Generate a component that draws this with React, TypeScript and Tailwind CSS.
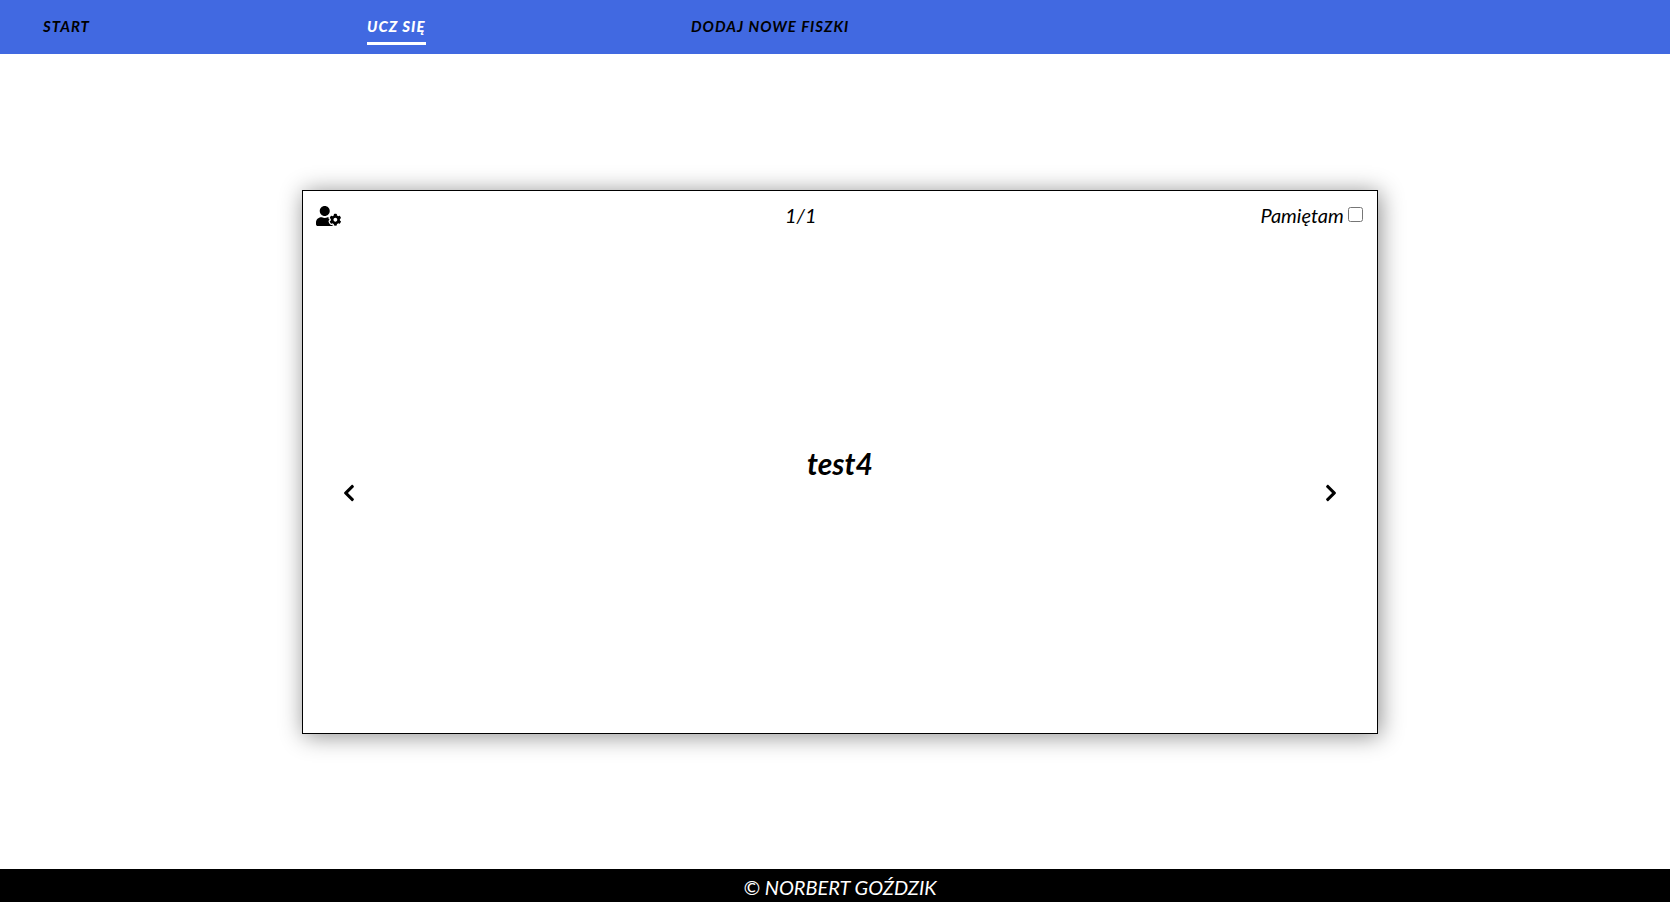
import { useState } from "react";
import { FaChevronLeft, FaChevronRight, FaUserCog } from "react-icons/fa";

const links = [
  { label: "START", href: "#start" },
  { label: "UCZ SIĘ", href: "#learn", active: true },
  { label: "DODAJ NOWE FISZKI", href: "#add" },
];

function Navigation() {
  return (
    <nav className="bg-[#4169e1] px-[43px]">
      <ul className="flex h-[54px] items-start">
        {links.map((link) => (
          <li key={link.label} className="w-[324px] pt-4">
            <a
              href={link.href}
              aria-current={link.active ? "page" : undefined}
              className={
                link.active
                  ? "block w-fit border-b-[3px] border-white pb-1.5 text-[15px] leading-5 font-black tracking-[1px] text-white"
                  : "block w-fit text-[15px] leading-5 font-bold tracking-[1px] text-black"
              }
            >
              {link.label}
            </a>
          </li>
        ))}
      </ul>
    </nav>
  );
}

function Flashcard() {
  const [remembered, setRemembered] = useState(false);

  return (
    <section className="flex h-[544px] w-[64.8%] flex-col border border-black bg-white shadow-[2px_2px_22px_rgba(0,0,0,0.45)]">
      <div className="flex items-center justify-between px-[13px] pt-3">
        <button type="button" aria-label="Ustawienia" className="pt-0.5">
          <FaUserCog className="h-5 w-[25px]" />
        </button>
        <span className="text-xl leading-6">1/1</span>
        <label className="flex items-center text-xl leading-6">
          Pamiętam
          <input
            type="checkbox"
            checked={remembered}
            onChange={(e) => setRemembered(e.target.checked)}
            className="mr-px ml-1 h-[15px] w-[15px]"
          />
        </label>
      </div>
      <div className="flex flex-1 items-center justify-between px-10 pt-[26px]">
        <button type="button" aria-label="Poprzednia">
          <FaChevronLeft className="h-5 w-3" />
        </button>
        <h2 className="pb-[60px] text-[30px] leading-10 font-bold">test4</h2>
        <button type="button" aria-label="Następna">
          <FaChevronRight className="h-5 w-3" />
        </button>
      </div>
    </section>
  );
}

export default function App() {
  return (
    <div className="flex min-h-screen flex-col bg-white font-['Lato',sans-serif] text-black italic">
      <Navigation />
      <main className="flex flex-1 items-center justify-center pl-2.5">
        <Flashcard />
      </main>
      <footer className="bg-black pt-1.5 pb-[3px] pl-2.5 text-center text-xl leading-6 text-white">
        © NORBERT GOŹDZIK
      </footer>
    </div>
  );
}
